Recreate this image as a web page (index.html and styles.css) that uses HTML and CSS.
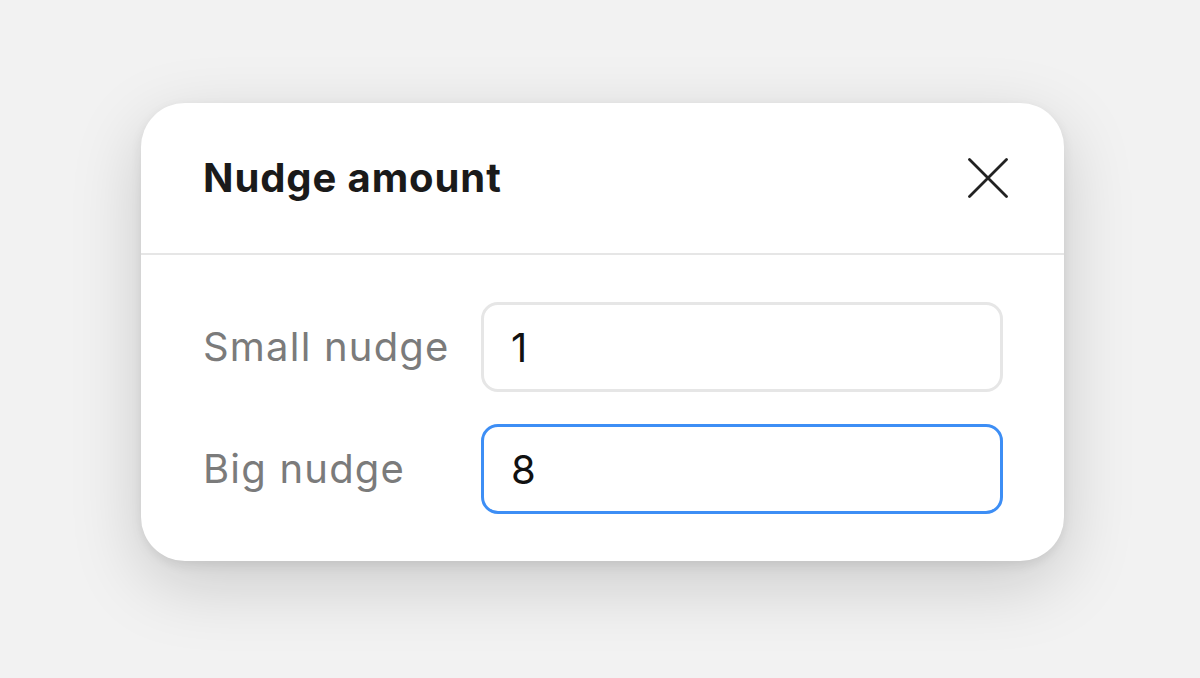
FILE: index.html
```html
<!DOCTYPE html>
<html>
<head>
<meta charset="utf-8">
<link rel="stylesheet" href="styles.css">
</head>
<body>
<div class="stage">
  <div class="dialog">
    <div class="header">
      <div class="title">Nudge amount</div>
      <button class="close" aria-label="Close">
        <svg width="40" height="40" viewBox="0 0 40 40"><path d="M1.5 1.5 L38.5 38.5 M38.5 1.5 L1.5 38.5" stroke="#222" stroke-width="2.8" stroke-linecap="round" fill="none"/></svg>
      </button>
    </div>
    <div class="body">
      <label class="label">Small nudge</label>
      <div class="input">1</div>
      <label class="label">Big nudge</label>
      <div class="input focus">8</div>
    </div>
  </div>
</div>
</body>
</html>
```
FILE: styles.css
```css
html, body {
  margin: 0;
  padding: 0;
  background: #f2f2f2;
  font-family: Inter, "Noto Sans", sans-serif;
}
.stage {
  padding: 103px 0 0 141px;
  min-height: 678px;
  box-sizing: border-box;
}
.dialog {
  width: 923px;
  background: #fff;
  border-radius: 44px;
  box-shadow: 0 22px 70px rgba(0,0,0,0.17), 0 4px 12px rgba(0,0,0,0.08);
  overflow: hidden;
}
.header {
  height: 152px;
  box-sizing: border-box;
  padding: 0 56px 0 62px;
  display: flex;
  align-items: center;
  justify-content: space-between;
  border-bottom: 2px solid #e6e6e6;
}
.title {
  font-size: 40px;
  font-weight: 650;
  color: #1a1a1a;
  letter-spacing: 0.9px;
  padding-bottom: 2px;
}
.close {
  border: 0;
  background: none;
  padding: 0;
  width: 40px;
  height: 40px;
  display: flex;
}
.body {
  padding: 47px 61px 47px 62px;
  display: grid;
  grid-template-columns: 278px 1fr;
  row-gap: 32px;
  align-items: center;
}
.label {
  font-size: 40px;
  color: #7b7b7b;
  letter-spacing: 1.2px;
  padding-bottom: 2px;
}
.input {
  height: 90px;
  box-sizing: border-box;
  border: 3px solid #e6e6e6;
  border-radius: 17px;
  padding-left: 27px;
  display: flex;
  align-items: center;
  font-size: 40px;
  color: #111;
}
.input.focus {
  border-color: #3d8ef5;
}
```
